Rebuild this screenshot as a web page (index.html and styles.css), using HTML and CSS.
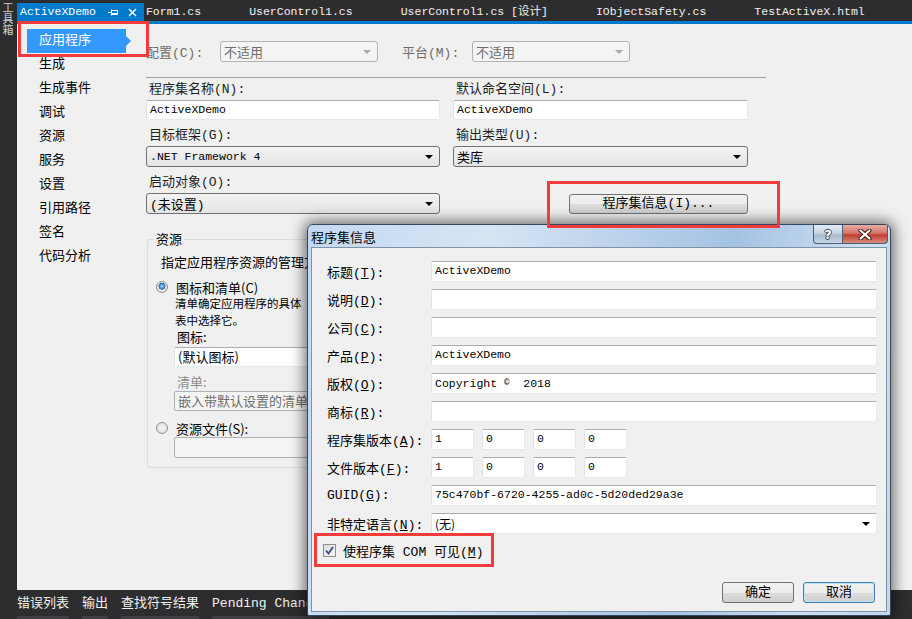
FILE: index.html
```html
<!DOCTYPE html>
<html lang="zh-CN">
<head>
    <meta charset="UTF-8">
    <meta name="viewport" content="width=device-width, initial-scale=1.0">
    <title>ActiveXDemo - 应用程序</title>
    <link rel="stylesheet" href="styles.css">
</head>
<body>

<div class="ide">
    <div class="toolbox-strip"><span>工具箱</span></div>

    <div class="main">
        <div class="doc-tabs">
            <div class="doc-tab active">
                <span>ActiveXDemo</span>
                <svg class="pin" width="10" height="7" viewBox="0 0 10 7"><path d="M0 3.5H3.5M3.5 0.5V6.5M3.5 1.5H9.5V5.5H3.5M3.5 4.5H9.5" stroke="#fff" fill="none"/></svg>
                <svg class="tab-close" width="9" height="9" viewBox="0 0 9 9"><path d="M1 1L8 8M8 1L1 8" stroke="#fff" stroke-width="1.5"/></svg>
            </div>
            <div class="doc-tab">Form1.cs</div>
            <div class="doc-tab">UserControl1.cs</div>
            <div class="doc-tab">UserControl1.cs [设计]</div>
            <div class="doc-tab">IObjectSafety.cs</div>
            <div class="doc-tab">TestActiveX.html</div>
        </div>

        <div class="editor">
            <ul class="side-nav">
                <li class="selected">应用程序</li>
                <li>生成</li>
                <li>生成事件</li>
                <li>调试</li>
                <li>资源</li>
                <li>服务</li>
                <li>设置</li>
                <li>引用路径</li>
                <li>签名</li>
                <li>代码分析</li>
            </ul>

            <div class="page">
                <div class="config-row">
                    <span class="cfg-label">配置(C):</span>
                    <div class="combo disabled">不适用</div>
                    <span class="cfg-label second">平台(M):</span>
                    <div class="combo disabled">不适用</div>
                </div>
                <div class="sep"></div>

                <div class="fields">
                    <div class="field">
                        <label>程序集名称(N):</label>
                        <div class="tbox">ActiveXDemo</div>
                    </div>
                    <div class="field">
                        <label>默认命名空间(L):</label>
                        <div class="tbox">ActiveXDemo</div>
                    </div>
                    <div class="field">
                        <label>目标框架(G):</label>
                        <div class="combo"><span class="latin">.NET Framework 4</span></div>
                    </div>
                    <div class="field">
                        <label>输出类型(U):</label>
                        <div class="combo">类库</div>
                    </div>
                    <div class="field">
                        <label>启动对象(O):</label>
                        <div class="combo">(未设置)</div>
                    </div>
                    <button type="button" class="btn info-btn">程序集信息(I)...</button>
                </div>

                <fieldset class="group">
                    <legend>资源</legend>
                    <div class="group-desc">指定应用程序资源的管理方</div>
                    <div class="radio-row"><span class="radio checked"></span>图标和清单(C)</div>
                    <div class="indent">
                        <div class="hint">清单确定应用程序的具体<br>表中选择它。</div>
                        <div class="sub-label">图标:</div>
                        <div class="tbox wide">(默认图标)</div>
                        <div class="sub-label muted">清单:</div>
                        <div class="tbox wide off">嵌入带默认设置的清单</div>
                    </div>
                    <div class="radio-row second"><span class="radio"></span>资源文件(S):</div>
                    <div class="indent">
                        <div class="tbox wide off last"></div>
                    </div>
                </fieldset>
            </div>
        </div>

        <div class="tool-tabs">
            <div class="tool-tab">错误列表</div>
            <div class="tool-tab">输出</div>
            <div class="tool-tab">查找符号结果</div>
            <div class="tool-tab">Pending Changes</div>
        </div>
    </div>

    <div class="dialog">
        <div class="dlg-title">
            <span>程序集信息</span>
            <div class="caption-btns">
                <span class="cap-help">?</span>
                <span class="cap-close">
                    <svg width="14" height="11" viewBox="0 0 14 11"><path d="M2.5 1.5L11.5 9.5M11.5 1.5L2.5 9.5" stroke="#3b1f1a" stroke-width="4.2" stroke-linecap="round"/><path d="M2.5 1.5L11.5 9.5M11.5 1.5L2.5 9.5" stroke="#fff" stroke-width="2.2" stroke-linecap="round"/></svg>
                </span>
            </div>
        </div>
        <div class="dlg-client">
            <div class="dlg-row"><label>标题(<u>T</u>):</label><div class="tbox">ActiveXDemo</div></div>
            <div class="dlg-row"><label>说明(<u>D</u>):</label><div class="tbox"></div></div>
            <div class="dlg-row"><label>公司(<u>C</u>):</label><div class="tbox"></div></div>
            <div class="dlg-row"><label>产品(<u>P</u>):</label><div class="tbox">ActiveXDemo</div></div>
            <div class="dlg-row"><label>版权(<u>O</u>):</label><div class="tbox">Copyright <span class="copy">©</span>  2018</div></div>
            <div class="dlg-row"><label>商标(<u>R</u>):</label><div class="tbox"></div></div>
            <div class="dlg-row">
                <label>程序集版本(<u>A</u>):</label>
                <div class="versions">
                    <div class="tbox">1</div><div class="tbox">0</div><div class="tbox">0</div><div class="tbox">0</div>
                </div>
            </div>
            <div class="dlg-row">
                <label>文件版本(<u>F</u>):</label>
                <div class="versions">
                    <div class="tbox">1</div><div class="tbox">0</div><div class="tbox">0</div><div class="tbox">0</div>
                </div>
            </div>
            <div class="dlg-row"><label>GUID(<u>G</u>):</label><div class="tbox">75c470bf-6720-4255-ad0c-5d20ded29a3e</div></div>
            <div class="dlg-row"><label>非特定语言(<u>N</u>):</label><div class="tbox edit-combo">(无)</div></div>

            <div class="dlg-check">
                <span class="checkbox">
                    <svg width="11" height="11" viewBox="0 0 11 11"><path d="M2 5.5L4.5 8.5L9 2" stroke="#34499a" stroke-width="1.8" fill="none"/></svg>
                </span>
                <span class="check-text">使程序集 COM 可见(<u>M</u>)</span>
            </div>

            <div class="dlg-buttons">
                <button type="button" class="btn">确定</button>
                <button type="button" class="btn focused">取消</button>
            </div>
        </div>
    </div>

    <!-- red highlight frames from the screenshot -->
    <div class="callout nav-callout"></div>
    <div class="callout btn-callout"></div>
    <div class="callout check-callout"></div>
</div>

</body>
</html>
```

FILE: styles.css
```css
* {
    box-sizing: border-box;
}

body {
    margin: 0;
    background-color: #2d2d30;
    font-family: "Liberation Mono", "Noto Sans CJK SC", monospace;
    font-size: 13px;
    color: #1e1e1e;
    overflow: hidden;
}

.ide {
    position: relative;
    display: flex;
    width: 912px;
    height: 619px;
    overflow: hidden;
}

/* left tool window strip */
.toolbox-strip {
    width: 17px;
    flex: none;
    color: #d0d0d0;
    font-family: "Noto Sans CJK SC", sans-serif;
    font-size: 11px;
}

.toolbox-strip span {
    display: block;
    writing-mode: vertical-rl;
    line-height: 12px;
    margin: 2px 0 0 2px;
}

.main {
    flex: 1;
    display: flex;
    flex-direction: column;
    min-width: 0;
}

/* document tabs */
.doc-tabs {
    height: 24px;
    display: flex;
    align-items: flex-end;
    border-bottom: 3px solid #007acc;
    color: #f1f1f1;
    font-size: 11.5px;
    white-space: nowrap;
}

.doc-tab {
    height: 18px;
    line-height: 18px;
    padding: 0 46px 0 2px;
}

.doc-tab.active {
    display: flex;
    align-items: center;
    background-color: #007acc;
    color: #fff;
    padding: 0 7px 0 3px;
}

.pin {
    margin-left: 12px;
}

.tab-close {
    margin-left: 10px;
}

/* editor surface */
.editor {
    flex: 1;
    display: flex;
    background-color: #f0f0f0;
    min-height: 0;
}

.side-nav {
    width: 129px;
    flex: none;
    list-style: none;
    margin: 0;
    padding: 5px 0 0 10px;
}

.side-nav li {
    width: 99px;
    height: 24px;
    line-height: 24px;
    padding-left: 12px;
    color: #000;
}

.side-nav li.selected {
    position: relative;
    background-color: #3399ff;
    color: #fff;
}

.side-nav li.selected::after {
    content: "";
    position: absolute;
    left: 100%;
    top: 7px;
    border-left: 5px solid #3399ff;
    border-top: 5px solid transparent;
    border-bottom: 5px solid transparent;
}

.page {
    padding-top: 17px;
}

.config-row {
    display: flex;
    align-items: center;
    height: 21px;
}

.cfg-label {
    width: 74px;
    color: #6d6d6d;
}

.cfg-label.second {
    width: 70px;
    margin-left: 24px;
}

.combo {
    height: 21px;
    display: flex;
    align-items: center;
    justify-content: space-between;
    padding-left: 3px;
    border: 1px solid #707070;
    border-radius: 3px;
    background: linear-gradient(#f3f3f3, #e4e4e4);
    color: #000;
    white-space: nowrap;
}

.combo::after {
    content: "";
    margin-right: 6px;
    border-top: 4px solid #000;
    border-left: 4px solid transparent;
    border-right: 4px solid transparent;
}

.combo.disabled {
    width: 158px;
    border-color: #b2b2b2;
    background: #f4f4f4;
    color: #6d6d6d;
}

.combo.disabled::after {
    border-top-color: #a8a8a8;
}

.latin {
    font-size: 11.5px;
}

.sep {
    width: 620px;
    margin-top: 15px;
    border-top: 1px solid #a0a0a0;
}

.fields {
    display: grid;
    grid-template-columns: 294px 295px;
    column-gap: 13px;
    row-gap: 8px;
    margin-top: 4px;
}

.field label {
    display: block;
    line-height: 16px;
    margin-bottom: 2px;
    padding-left: 3px;
}

.tbox {
    height: 20px;
    background-color: #fff;
    border: 1px solid #e3e9ef;
    border-top-color: #abadb3;
    border-left-color: #e2e3ea;
    border-radius: 2px;
    padding-left: 3px;
    font-size: 11.5px;
    line-height: 18px;
    color: #000;
    white-space: pre;
    overflow: hidden;
}

.btn {
    height: 21px;
    border: 1px solid #707070;
    border-radius: 3px;
    background: linear-gradient(#f2f2f2 0%, #ebebeb 50%, #dddddd 51%, #cfcfcf 100%);
    font-family: inherit;
    font-size: 13px;
    line-height: 18px;
    color: #000;
    padding: 0;
}

.info-btn {
    width: 179px;
    height: 20px;
    justify-self: end;
    align-self: end;
}

/* resources group */
.group {
    width: 601px;
    margin: 17px 0 0 1px;
    padding: 0 0 9px 0;
    border: 1px solid #d5dfe5;
    border-radius: 3px;
    font-family: "Noto Sans CJK SC", sans-serif;
    font-size: 13px;
    color: #000;
}

.group legend {
    margin-left: 6px;
    padding: 0 2px;
    line-height: 16px;
}

.group-desc {
    margin: 8px 0 0 13px;
    line-height: 14px;
    white-space: nowrap;
}

.radio-row {
    display: flex;
    align-items: center;
    margin: 11px 0 0 8px;
    height: 14px;
}

.radio-row.second {
    margin-top: 10px;
}

.radio {
    width: 12px;
    height: 12px;
    margin-right: 8px;
    border: 1px solid #8e8f8f;
    border-radius: 50%;
    background: radial-gradient(circle, #f4f4f4 0%, #dcdcdc 100%);
}

.radio.checked {
    background:
        radial-gradient(circle at 50% 42%, #a9dcfa 0%, #3f8fd6 30%, #1c5a9b 42%, rgba(0, 0, 0, 0) 48%),
        radial-gradient(circle, #f4f4f4 0%, #dcdcdc 100%);
}

.indent {
    margin-left: 26px;
    width: 560px;
}

.hint {
    margin-top: 1px;
    padding-left: 1px;
    font-size: 11.5px;
    line-height: 17px;
    white-space: nowrap;
}

.sub-label {
    margin-top: 1px;
    padding-left: 3px;
    line-height: 14px;
}

.sub-label.muted {
    margin-top: 8px;
    color: #8d8d8d;
}

.tbox.wide {
    margin-top: 3px;
    font-family: "Noto Sans CJK SC", sans-serif;
    font-size: 13px;
}

.tbox.off {
    margin-top: 2px;
    background-color: #f4f4f4;
    border-color: #adb2b5;
    color: #6d6d6d;
}

.tbox.last {
    height: 21px;
}

/* bottom tool tabs */
.tool-tabs {
    height: 29px;
    display: flex;
    color: #f1f1f1;
    white-space: nowrap;
}

.tool-tab {
    height: 29px;
    padding-top: 5px;
    line-height: 18px;
    margin-right: 13px;
    border-bottom: 3px solid #3f3f46;
}

/* assembly info dialog */
.dialog {
    position: absolute;
    left: 307px;
    top: 224px;
    width: 584px;
    height: 392px;
    display: flex;
    flex-direction: column;
    padding: 0 3px 3px;
    border: 1px solid #34475e;
    border-radius: 6px 6px 2px 2px;
    background: linear-gradient(100deg, #c3d8ef 0%, #d6e5f4 28%, #b6cfe9 52%, #a4c2e3 66%, #cde0f2 86%, #c2d7ee 100%);
    box-shadow: 0 0 14px 3px rgba(0, 0, 0, 0.55);
    z-index: 3;
}

.dlg-title {
    position: relative;
    height: 22px;
    display: flex;
    align-items: center;
    color: #000;
}

.caption-btns {
    position: absolute;
    top: 0;
    right: -1px;
    display: flex;
}

.cap-help,
.cap-close {
    height: 19px;
    display: flex;
    align-items: center;
    justify-content: center;
    border: 1px solid #4e5f75;
    border-top: none;
}

.cap-help {
    width: 29px;
    border-radius: 0 0 0 4px;
    border-right: none;
    background: linear-gradient(#e4ecf5 0%, #c9d6e5 45%, #aabbd0 55%, #c8d6e6 100%);
    color: #fff;
    font-family: "DejaVu Sans", sans-serif;
    font-size: 13px;
    font-weight: bold;
    text-shadow: 1px 0 #3b4a5c, -1px 0 #3b4a5c, 0 1px #3b4a5c, 0 -1px #3b4a5c;
}

.cap-close {
    width: 46px;
    border-radius: 0 0 4px 0;
    background: linear-gradient(#e9aca4 0%, #d4766a 45%, #c0402e 55%, #d98a7e 100%);
}

.dlg-client {
    flex: 1;
    display: flex;
    flex-direction: column;
    padding: 13px 9px 8px 15px;
    background-color: #f0f0f0;
    border: 1px solid #7f92a8;
}

.dlg-row {
    display: flex;
    align-items: center;
    height: 21px;
    margin-bottom: 7px;
}

.dlg-row label {
    width: 104px;
    flex: none;
    color: #000;
    white-space: nowrap;
}

.dlg-row .tbox {
    flex: 1;
    height: 21px;
}

.copy {
    font-size: 9px;
    vertical-align: 2px;
}

.versions {
    display: flex;
    gap: 8px;
}

.versions .tbox {
    flex: none;
    width: 43px;
}

.tbox.edit-combo {
    display: flex;
    justify-content: space-between;
    align-items: center;
    font-family: "Noto Sans CJK SC", sans-serif;
    font-size: 12px;
}

.tbox.edit-combo::after {
    content: "";
    margin-right: 6px;
    border-top: 4px solid #000;
    border-left: 4px solid transparent;
    border-right: 4px solid transparent;
}

.dlg-check {
    display: flex;
    align-items: center;
    height: 18px;
    margin-left: -4px;
    color: #000;
}

.check-text {
    white-space: nowrap;
}

.checkbox {
    width: 13px;
    height: 13px;
    flex: none;
    margin-right: 7px;
    display: flex;
    align-items: center;
    justify-content: center;
    border: 1px solid #8e8f8f;
    background: linear-gradient(135deg, #dcdcdc, #fafafa);
}

.dlg-buttons {
    margin-top: auto;
    margin-right: 2px;
    display: flex;
    justify-content: flex-end;
    gap: 9px;
}

.dlg-buttons .btn {
    width: 72px;
}

.dlg-buttons .btn.focused {
    border-color: #3c7fb1;
    box-shadow: inset 0 0 0 1px #bde6fa;
}

/* red highlight frames */
.callout {
    position: absolute;
    border: 3px solid #f33b3b;
    z-index: 5;
}

.nav-callout {
    left: 18px;
    top: 21px;
    width: 131px;
    height: 36px;
}

.btn-callout {
    left: 547px;
    top: 181px;
    width: 233px;
    height: 47px;
}

.check-callout {
    left: 314px;
    top: 533px;
    width: 180px;
    height: 34px;
}
```
